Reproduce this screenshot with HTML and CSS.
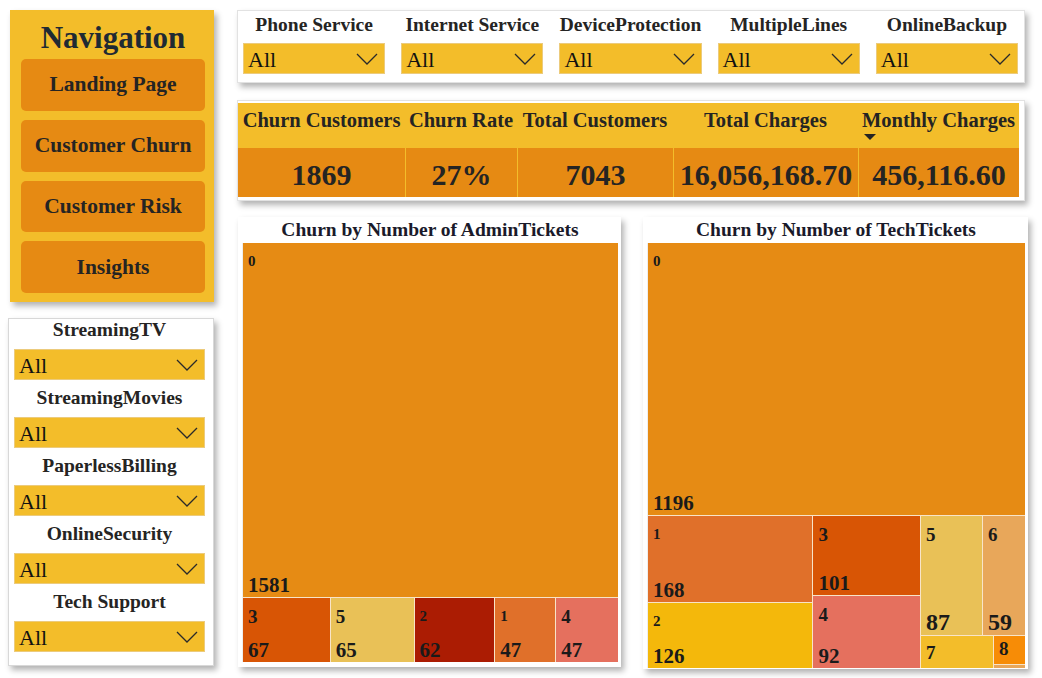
FILE: index.html
```html
<!DOCTYPE html>
<html lang="en">
<head>
<meta charset="utf-8">
<title>Customer Churn</title>
<link rel="stylesheet" href="styles.css">
</head>
<body>
<div class="page">
  <aside class="side">
    <nav class="nav">
      <h1 class="nav-title">Navigation</h1>
      <a class="nav-btn">Landing Page</a>
      <a class="nav-btn">Customer Churn</a>
      <a class="nav-btn">Customer Risk</a>
      <a class="nav-btn">Insights</a>
    </nav>
    <section class="side-filters">
      <div class="sf"><div class="f-label">StreamingTV</div><div class="dd"><span>All</span><svg class="chev" viewBox="0 0 22 12"><path d="M1 1 L11 11 L21 1"/></svg></div></div>
      <div class="sf"><div class="f-label">StreamingMovies</div><div class="dd"><span>All</span><svg class="chev" viewBox="0 0 22 12"><path d="M1 1 L11 11 L21 1"/></svg></div></div>
      <div class="sf"><div class="f-label">PaperlessBilling</div><div class="dd"><span>All</span><svg class="chev" viewBox="0 0 22 12"><path d="M1 1 L11 11 L21 1"/></svg></div></div>
      <div class="sf"><div class="f-label">OnlineSecurity</div><div class="dd"><span>All</span><svg class="chev" viewBox="0 0 22 12"><path d="M1 1 L11 11 L21 1"/></svg></div></div>
      <div class="sf"><div class="f-label">Tech Support</div><div class="dd"><span>All</span><svg class="chev" viewBox="0 0 22 12"><path d="M1 1 L11 11 L21 1"/></svg></div></div>
    </section>
  </aside>

  <main class="main">
    <section class="filters">
      <div class="tf"><div class="f-label">Phone Service</div><div class="dd"><span>All</span><svg class="chev" viewBox="0 0 22 12"><path d="M1 1 L11 11 L21 1"/></svg></div></div>
      <div class="tf"><div class="f-label">Internet Service</div><div class="dd"><span>All</span><svg class="chev" viewBox="0 0 22 12"><path d="M1 1 L11 11 L21 1"/></svg></div></div>
      <div class="tf"><div class="f-label">DeviceProtection</div><div class="dd"><span>All</span><svg class="chev" viewBox="0 0 22 12"><path d="M1 1 L11 11 L21 1"/></svg></div></div>
      <div class="tf"><div class="f-label">MultipleLines</div><div class="dd"><span>All</span><svg class="chev" viewBox="0 0 22 12"><path d="M1 1 L11 11 L21 1"/></svg></div></div>
      <div class="tf"><div class="f-label">OnlineBackup</div><div class="dd"><span>All</span><svg class="chev" viewBox="0 0 22 12"><path d="M1 1 L11 11 L21 1"/></svg></div></div>
    </section>

    <section class="kpis">
      <div class="kpi-table">
        <div class="kh">Churn Customers</div>
        <div class="kh">Churn Rate</div>
        <div class="kh">Total Customers</div>
        <div class="kh">Total Charges</div>
        <div class="kh sorted">Monthly Charges<span class="sort-arrow"></span></div>
        <div class="kv">1869</div>
        <div class="kv">27%</div>
        <div class="kv">7043</div>
        <div class="kv">16,056,168.70</div>
        <div class="kv">456,116.60</div>
      </div>
    </section>

    <section class="charts">
      <div class="chart chart-admin">
        <div class="chart-title">Churn by Number of AdminTickets</div>
        <div class="tm tm-admin">
          <div class="tile t-big c-orange"><span class="cat sm">0</span><span class="val">1581</span></div>
          <div class="tm-row a-row">
            <div class="tile a1 c-dark"><span class="cat">3</span><span class="val">67</span></div>
            <div class="tile a2 c-sand"><span class="cat">5</span><span class="val">65</span></div>
            <div class="tile a3 c-red"><span class="cat sm">2</span><span class="val">62</span></div>
            <div class="tile a4 c-tang"><span class="cat sm">1</span><span class="val">47</span></div>
            <div class="tile a5 c-salmon"><span class="cat">4</span><span class="val">47</span></div>
          </div>
        </div>
      </div>

      <div class="chart chart-tech">
        <div class="chart-title">Churn by Number of TechTickets</div>
        <div class="tm tm-tech">
          <div class="tile t-big c-orange"><span class="cat sm">0</span><span class="val">1196</span></div>
          <div class="tm-row t-bottom">
            <div class="tm-col col-a">
              <div class="tile r1 c-tang"><span class="cat sm">1</span><span class="val">168</span></div>
              <div class="tile r2 c-gold"><span class="cat sm">2</span><span class="val">126</span></div>
            </div>
            <div class="tm-col col-b">
              <div class="tile r3 c-dark"><span class="cat">3</span><span class="val">101</span></div>
              <div class="tile r4 c-salmon"><span class="cat">4</span><span class="val">92</span></div>
            </div>
            <div class="tm-col col-c">
              <div class="tm-row c-top">
                <div class="tile r5 c-sand"><span class="cat">5</span><span class="val big">87</span></div>
                <div class="tile r6 c-peach"><span class="cat">6</span><span class="val big">59</span></div>
              </div>
              <div class="tm-row c-bot">
                <div class="tile r7 c-yellow"><span class="cat">7</span></div>
                <div class="tm-col r8col">
                  <div class="tile r8 c-bright"><span class="cat">8</span></div>
                  <div class="tile r9 c-peach"></div>
                </div>
              </div>
            </div>
          </div>
        </div>
      </div>
    </section>
  </main>
</div>
</body>
</html>
```

FILE: styles.css
```css
* { box-sizing: border-box; }

body {
  margin: 0;
  background: #ffffff;
  font-family: "Liberation Serif", "DejaVu Serif", serif;
  color: #252423;
}

.page {
  display: flex;
  padding-top: 10px;
  width: 1042px;
  height: 678px;
  overflow: hidden;
}

/* ---------- left column ---------- */
.side {
  width: 214px;
  display: flex;
  flex-direction: column;
}

.nav {
  margin-left: 10px;
  width: 204px;
  height: 292px;
  background: #f3bd2a;
  box-shadow: 3px 4px 6px rgba(0, 0, 0, 0.3);
  padding: 8px 9px 0 11px;
  display: flex;
  flex-direction: column;
}

.nav-title {
  margin: 0 0 1px;
  font-size: 31px;
  line-height: 40px;
  font-weight: bold;
  text-align: center;
  color: #1f2a33;
}

.nav-btn {
  display: flex;
  align-items: center;
  justify-content: center;
  height: 52px;
  margin-bottom: 9px;
  background: #e68a13;
  border-radius: 5px;
  font-size: 21.5px;
  font-weight: bold;
  color: #252423;
}

.side-filters {
  margin: 16px 0 0 8px;
  width: 206px;
  height: 348px;
  background: #fff;
  border: 1px solid #d8d8d8;
  box-shadow: 3px 4px 6px rgba(0, 0, 0, 0.3);
  padding: 0 8px 0 5px;
  display: flex;
  flex-direction: column;
  gap: 7px;
}

.f-label {
  font-size: 19.5px;
  font-weight: bold;
  line-height: 22px;
  text-align: center;
  white-space: nowrap;
  color: #252423;
}

.sf .dd { margin-top: 8px; }

.dd {
  height: 31px;
  background: #f3bd2a;
  border: 1px solid #eccb7c;
  display: flex;
  align-items: center;
  justify-content: space-between;
  padding: 3px 6px 0 4px;
  font-size: 22px;
  color: #111;
}

.chev {
  width: 22px;
  height: 12px;
  margin-bottom: 3px;
}

.chev path {
  fill: none;
  stroke: #2a2a2a;
  stroke-width: 1.3;
}

/* ---------- main ---------- */
.main {
  margin-left: 23px;
  width: 792px;
  display: flex;
  flex-direction: column;
}

.filters {
  width: 788px;
  height: 73px;
  background: #fff;
  border: 1px solid #e2e2e2;
  box-shadow: 3px 4px 6px rgba(0, 0, 0, 0.3);
  padding: 3px 6px 0 5px;
  display: flex;
  gap: 16px;
}

.tf { flex: 1; min-width: 0; }
.tf .dd { margin-top: 7px; }

.kpis {
  margin-top: 17px;
  width: 788px;
  height: 101px;
  background: #fff;
  border: 1px solid #e2e2e2;
  box-shadow: 3px 4px 6px rgba(0, 0, 0, 0.3);
  padding: 2px 5px 0 0;
}

.kpi-table {
  display: grid;
  grid-template-columns: 167px 112px 156px 185px 161px;
  grid-template-rows: 45px 49px;
}

.kh {
  background: #f3bd2a;
  font-size: 20.5px;
  font-weight: bold;
  line-height: 22px;
  padding-top: 6px;
  text-align: center;
  white-space: nowrap;
}

.sorted { position: relative; }

.sort-arrow {
  position: absolute;
  left: 6px;
  top: 31px;
  width: 0;
  height: 0;
  border-left: 6px solid transparent;
  border-right: 6px solid transparent;
  border-top: 6px solid #252423;
}

.kv {
  background: #e68a13;
  border-left: 1px solid #f3bd2a;
  font-size: 30px;
  font-weight: bold;
  display: flex;
  align-items: center;
  justify-content: center;
  padding-top: 5px;
  white-space: nowrap;
}

.kv:nth-child(6) { border-left: none; }

/* ---------- charts ---------- */
.charts {
  margin-top: 16px;
  display: flex;
  gap: 22px;
  margin-left: 1px;
}

.chart {
  background: #fff;
  box-shadow: 3px 4px 6px rgba(0, 0, 0, 0.3);
  display: flex;
  flex-direction: column;
}

.chart-admin { width: 383px; height: 450px; padding: 0 3px 5px 4px; }
.chart-tech { width: 385px; height: 452px; padding: 0 3px 1px 4px; }

.chart-title {
  height: 26px;
  line-height: 25px;
  font-size: 19.5px;
  font-weight: bold;
  text-align: center;
  color: #1a1a2a;
  white-space: nowrap;
}

.tm {
  flex: 1;
  display: flex;
  flex-direction: column;
  gap: 1px;
  background: #f8e4c8;
  border-left: 1px solid #eee;
}

.tm-row { display: flex; gap: 1px; }
.tm-col { display: flex; flex-direction: column; gap: 1px; }

.tile {
  display: flex;
  flex-direction: column;
  justify-content: space-between;
  padding: 8px 5px 0 5px;
  overflow: hidden;
  font-weight: bold;
  color: #1a1a1a;
}

.cat { font-size: 19px; line-height: 22px; }
.cat.sm { font-size: 15px; line-height: 20px; }
.val { font-size: 21px; line-height: 24px; }
.val.big { font-size: 24px; line-height: 26px; }

.t-big { flex: 1; }

/* admin treemap */
.a-row { height: 64px; }
.a1 { width: 87px; }
.a2 { width: 83px; }
.a3 { width: 80px; }
.a4 { width: 60px; }
.a5 { width: 62px; }

/* tech treemap */
.t-bottom { height: 152px; }
.col-a { width: 165px; }
.col-b { width: 107px; }
.col-c { width: 104px; }
.r1 { height: 86px; }
.r2 { height: 65px; }
.r3 { height: 79px; }
.r4 { height: 72px; }
.c-top { height: 119px; }
.c-bot { height: 32px; }
.r5 { width: 61px; }
.r6 { width: 42px; }
.r7 { width: 72px; padding-top: 6px; }
.r8col { width: 31px; }
.r8 { height: 28px; padding-top: 2px; }
.r9 { height: 3px; padding: 0; }

/* colours */
.c-orange { background: #e68b14; }
.c-dark { background: #d85505; }
.c-sand { background: #e9c157; }
.c-red { background: #ab1c03; }
.c-tang { background: #e0702a; }
.c-salmon { background: #e5705e; }
.c-gold { background: #f4b80b; }
.c-peach { background: #e8a75a; }
.c-yellow { background: #f3bd2a; }
.c-bright { background: #f78c06; }
```
